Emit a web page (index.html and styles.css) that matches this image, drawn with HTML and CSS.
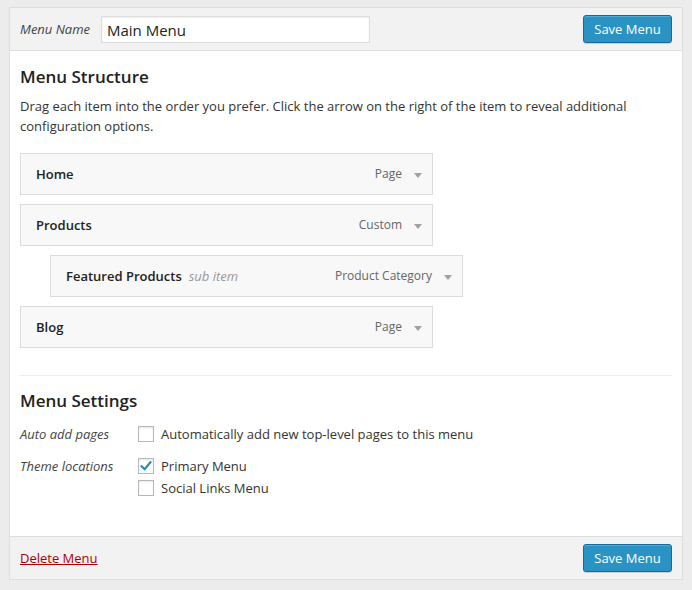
FILE: index.html
```html
<!DOCTYPE html>
<html>
<head>
<meta charset="utf-8">
<link rel="stylesheet" href="styles.css">
</head>
<body>
<div class="page">
  <div class="panel">
    <div class="panel-head">
      <label class="name-label">Menu Name</label>
      <input class="name-input" type="text" value="Main Menu">
      <button class="btn-primary">Save Menu</button>
    </div>
    <div class="panel-body">
      <h3 class="section-title">Menu Structure</h3>
      <p class="intro">Drag each item into the order you prefer. Click the arrow on the right of the item to reveal additional configuration options.</p>
      <ul class="menu-list">
        <li class="menu-item">
          <span class="item-title">Home</span>
          <span class="item-type">Page</span>
          <span class="item-arrow"></span>
        </li>
        <li class="menu-item">
          <span class="item-title">Products</span>
          <span class="item-type">Custom</span>
          <span class="item-arrow"></span>
        </li>
        <li class="menu-item sub">
          <span class="item-title">Featured Products</span>
          <span class="item-sub">sub item</span>
          <span class="item-type">Product Category</span>
          <span class="item-arrow"></span>
        </li>
        <li class="menu-item">
          <span class="item-title">Blog</span>
          <span class="item-type">Page</span>
          <span class="item-arrow"></span>
        </li>
      </ul>
      <div class="divider"></div>
      <h3 class="section-title settings-title">Menu Settings</h3>
      <div class="setting-row">
        <div class="setting-label">Auto add pages</div>
        <div class="setting-options">
          <label class="opt"><span class="cb"></span>Automatically add new top-level pages to this menu</label>
        </div>
      </div>
      <div class="setting-row second">
        <div class="setting-label">Theme locations</div>
        <div class="setting-options">
          <label class="opt"><span class="cb checked"><svg viewBox="0 0 16 16" width="16" height="16"><path d="M3.6 8.2 L6.6 11.2 L12.4 4.4" fill="none" stroke="#1e8cbe" stroke-width="2.2" stroke-linecap="square"/></svg></span>Primary Menu</label>
          <label class="opt"><span class="cb"></span>Social Links Menu</label>
        </div>
      </div>
    </div>
    <div class="panel-foot">
      <a class="delete-link" href="#">Delete Menu</a>
      <button class="btn-primary">Save Menu</button>
    </div>
  </div>
</div>
</body>
</html>
```
FILE: styles.css
```css
* { box-sizing: border-box; }
html, body {
  margin: 0;
  padding: 0;
  background: #ececec;
  font-family: "Open Sans", "Liberation Sans", sans-serif;
  font-size: 13px;
  color: #222;
}
.page {
  padding: 7px 9px 0 9px;
}
.panel {
  width: 674px;
  height: 573px;
  border: 1px solid #dedede;
  background: #fff;
  box-shadow: 0 1px 1px rgba(0,0,0,0.04);
  display: flex;
  flex-direction: column;
}
.panel-head, .panel-foot {
  background: #f2f2f2;
  height: 43px;
  display: flex;
  align-items: center;
  padding: 0 10px;
  flex: none;
}
.panel-head { border-bottom: 1px solid #dddddd; }
.panel-foot { border-top: 1px solid #dddddd; justify-content: space-between; }
.name-label {
  font-style: italic;
  color: #444;
  font-size: 13px;
  width: 81px;
}
.name-input {
  width: 269px;
  height: 27px;
  border: 1px solid #dddddd;
  box-shadow: inset 0 1px 2px rgba(0,0,0,0.07);
  font-family: "Open Sans", "Liberation Sans", sans-serif;
  font-size: 15px;
  color: #222;
  padding: 0 5px;
  margin: 1px 0 0 0;
  outline: none;
  background: #fff;
}
.btn-primary {
  margin-left: auto;
  height: 28px;
  width: 89px;
  padding: 0;
  border: 1px solid #16699a;
  border-radius: 3px;
  background: #2a93c4;
  box-shadow: inset 0 1px 0 rgba(120,200,230,0.5), 0 1px 0 rgba(0,0,0,0.15);
  color: #fff;
  font-family: "Open Sans", "Liberation Sans", sans-serif;
  font-size: 13px;
  line-height: 26px;
}
.panel-body {
  flex: 1;
  padding: 14px 10px 0 10px;
}
.section-title {
  margin: 0;
  font-size: 17px;
  line-height: 24px;
  font-weight: 600;
  color: #222;
}
.intro {
  margin: 7px 0 0 0;
  line-height: 20px;
  color: #333;
}
.menu-list {
  list-style: none;
  margin: 17px 0 0 0;
  padding: 0;
}
.menu-item {
  width: 413px;
  height: 42px;
  border: 1px solid #dcdcdc;
  background: #f8f8f8;
  display: flex;
  align-items: center;
  padding: 0 10px 0 15px;
  margin-top: 9px;
  line-height: 20px;
}
.menu-item:first-child { margin-top: 0; }
.menu-item.sub { margin-left: 30px; }
.item-title {
  font-weight: 600;
  color: #222;
}
.item-sub {
  margin-left: 7px;
  font-style: italic;
  color: #999;
}
.item-type {
  margin-left: auto;
  color: #666;
  font-size: 12px;
}
.item-arrow {
  margin-left: 12px;
  width: 0;
  height: 0;
  border-left: 4px solid transparent;
  border-right: 4px solid transparent;
  border-top: 5px solid #a0a0a0;
  margin-top: 2px;
}
.divider {
  height: 1px;
  background: #eeeeee;
  margin-top: 27px;
}
.settings-title { margin-top: 13px; }
.setting-row {
  display: flex;
  margin-top: 11px;
}
.setting-row.second { margin-top: 12px; }
.setting-label {
  width: 118px;
  font-style: italic;
  color: #444;
  line-height: 20px;
  flex: none;
}
.setting-options {
  display: flex;
  flex-direction: column;
  gap: 2px;
}
.opt {
  display: flex;
  align-items: center;
  height: 20px;
  color: #333;
}
.cb {
  width: 16px;
  height: 16px;
  border: 1px solid #b4b9be;
  background: #fff;
  box-shadow: inset 0 1px 2px rgba(0,0,0,0.1);
  margin-right: 7px;
  flex: none;
  position: relative;
}
.cb svg { position: absolute; left: -1px; top: -1px; }
.delete-link {
  color: #a00;
  text-decoration: underline;
  font-size: 13px;
}
```
